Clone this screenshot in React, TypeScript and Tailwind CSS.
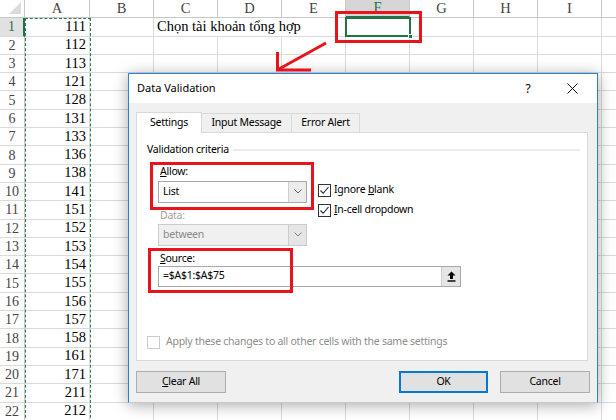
import React from 'react';

const VALUES = [
  111, 112, 113, 121, 128, 131, 133, 136, 138, 141, 151, 152, 153, 154, 155,
  156, 157, 158, 161, 171, 211, 212,
];
const COLS = ['A', 'B', 'C', 'D', 'E', 'F', 'G', 'H', 'I'];

const colWidth = (c: string) => (c === 'A' ? 'w-[65px]' : 'w-[64px]');

const Chevron: React.FC<{ color?: string }> = ({ color = '#606060' }) => (
  <svg width="8" height="5" viewBox="0 0 8 5">
    <path d="M0.5 0.5 L4 4 L7.5 0.5" fill="none" stroke={color} strokeWidth="1" />
  </svg>
);

const CheckBox: React.FC<{ checked?: boolean; disabled?: boolean }> = ({
  checked,
  disabled,
}) => (
  <div
    className={`w-[13px] h-[13px] flex-shrink-0 border bg-white flex items-center justify-center ${
      disabled ? 'border-[#cccccc]' : 'border-[#333333]'
    }`}
  >
    {checked && (
      <svg width="11" height="11" viewBox="0 0 11 11">
        <path d="M1.5 5.5 L4.2 8.3 L9.5 2" fill="none" stroke="#222" strokeWidth="1.1" />
      </svg>
    )}
  </div>
);

const Sheet: React.FC = () => (
  <div className="flex flex-col font-['Liberation_Serif',serif] text-[14.5px] text-black">
    {/* column headers */}
    <div className="flex h-[18.3px]">
      <div className="w-[25px] flex-shrink-0 border-r border-b border-[#c8c8c8] relative">
        <svg className="absolute right-[3px] bottom-[3px]" width="12" height="12" viewBox="0 0 12 12">
          <path d="M12 0 L12 12 L0 12 Z" fill="#dcdcdc" />
        </svg>
      </div>
      {COLS.map((c) => (
        <div
          key={c}
          className={`${colWidth(c)} flex-shrink-0 flex items-center justify-center border-r ${
            c === 'F'
              ? 'bg-[#d6d6d6] text-[#217346] border-b-2 border-b-[#217346] border-r-[#c8c8c8]'
              : 'text-[#444444] border-b border-[#c8c8c8]'
          }`}
        >
          {c}
        </div>
      ))}
      <div className="flex-1 border-b border-[#c8c8c8]" />
    </div>
    {VALUES.map((v, i) => (
      <div key={i} className="flex h-[18.3px] flex-shrink-0">
        <div
          className={`w-[25px] flex-shrink-0 flex items-center justify-center text-[14px] border-b border-[#dadada] ${
            i === 0
              ? 'bg-[#e1e1e1] text-[#217346] border-r-2 border-r-[#217346]'
              : 'text-[#444444] border-r border-r-[#c8c8c8]'
          }`}
        >
          {i + 1}
        </div>
        {COLS.map((c) => (
          <div
            key={c}
            className={`${colWidth(c)} flex-shrink-0 flex items-center border-b border-[#dadada] ${
              i === 0 && (c === 'C' || c === 'D') ? '' : 'border-r'
            } ${c === 'A' ? 'justify-end pr-[3px]' : ''} ${
              c === 'C' ? 'pl-[3px] overflow-visible whitespace-nowrap' : ''
            }`}
          >
            {c === 'A' && v}
            {c === 'C' && i === 0 && (
              <span className="text-[14.5px]">Chọn tài khoản tổng hợp</span>
            )}
          </div>
        ))}
        <div className="flex-1 border-b border-[#dadada]" />
      </div>
    ))}
  </div>
);

const Dialog: React.FC = () => (
  <div className="absolute left-[128px] top-[73px] w-[470px] h-[330px] flex flex-col border border-[#2a82d8] border-b-[#c9c9c9] bg-[#f0f0f0] shadow-[0_2px_14px_rgba(0,0,0,0.35)] font-['Noto_Sans',sans-serif] text-[10.5px] tracking-[-0.25px] text-black">
    <div className="h-[29px] bg-white flex items-center pl-[8px]">
      <span className="text-[11px] tracking-normal">Data Validation</span>
      <span className="ml-auto text-[12px] w-[10px] text-center">?</span>
      <div className="w-[11px] ml-[34px] mr-[19px] flex items-center">
        <svg width="11" height="11" viewBox="0 0 11 11">
          <path d="M0.5 0.5 L10.5 10.5 M10.5 0.5 L0.5 10.5" stroke="#111" strokeWidth="1" />
        </svg>
      </div>
    </div>
    <div className="flex-1 flex flex-col pl-[7px] pt-[8px]">
      {/* tabs */}
      <div className="flex items-end h-[21px]">
        <div className="w-[66px] h-[21px] bg-white border border-[#d9d9d9] border-b-0 flex items-center justify-center relative z-10 -mb-px pb-px">
          Settings
        </div>
        <div className="w-[90px] h-[19px] border-t border-r border-[#d9d9d9] flex items-center justify-center">
          Input Message
        </div>
        <div className="w-[68px] h-[19px] border-t border-r border-[#d9d9d9] flex items-center justify-center">
          Error Alert
        </div>
      </div>
      {/* panel */}
      <div className="w-[452px] h-[229px] bg-white border border-[#d9d9d9] flex flex-col pl-[10px]">
        <div className="flex items-center pt-[9px]">
          <span>Validation criteria</span>
          <div className="flex-1 h-[2px] bg-[#ececec] ml-[4px] mr-[7px] mt-px" />
        </div>
        <div className="flex pl-[11px] mt-[5px]">
          <div className="w-[149px] flex flex-col">
            <div className="pl-[2px] h-[16px] leading-[16px]">
              <span className="underline">A</span>llow:
            </div>
            <div className="mt-[2px] h-[22px] border border-[#a8a8a8] flex items-center bg-white">
              <span className="pl-[4px] flex-1">List</span>
              <div className="w-[18px] h-full border-l border-[#cfcfcf] bg-[#ececec] flex items-center justify-center">
                <Chevron />
              </div>
            </div>
            <div className="pl-[2px] h-[16px] leading-[16px] mt-[4px] text-[#a0a0a0]">
              Data:
            </div>
            <div className="mt-px h-[22px] border border-[#cccccc] flex items-center bg-[#f0f0f0] text-[#8a8a8a]">
              <span className="pl-[4px] flex-1">between</span>
              <div className="w-[18px] h-full border-l border-[#cccccc] bg-[#e5e5e5] flex items-center justify-center">
                <Chevron color="#808080" />
              </div>
            </div>
          </div>
          <div className="flex flex-col ml-[11px] mt-[21px] gap-[7px]">
            <div className="flex items-center gap-[3px] h-[13px]">
              <CheckBox checked />
              <span>
                Ignore <span className="underline">b</span>lank
              </span>
            </div>
            <div className="flex items-center gap-[3px] h-[13px]">
              <CheckBox checked />
              <span>
                <span className="underline">I</span>n-cell dropdown
              </span>
            </div>
          </div>
        </div>
        <div className="pl-[13px] h-[16px] leading-[16px] mt-[4px]">
          <span className="underline">S</span>ource:
        </div>
        <div className="ml-[11px] w-[303px] h-[21px] border border-[#a8a8a8] flex items-center bg-white">
          <span className="pl-[4px] flex-1">=$A$1:$A$75</span>
          <div className="w-[19px] h-full border-l border-[#cfcfcf] bg-[#e5e5e5] flex items-center justify-center">
            <svg width="9" height="11" viewBox="0 0 9 11">
              <path d="M4.5 0.5 L8.5 4.5 L6 4.5 L6 8 L3 8 L3 4.5 L0.5 4.5 Z" fill="#000" />
              <rect x="0.5" y="9.3" width="8" height="1.4" fill="#000" />
            </svg>
          </div>
        </div>
        <div className="mt-auto mb-[10px] flex items-center gap-[6px] text-[#8d8d8d]">
          <CheckBox disabled />
          <span>Apply these changes to all other cells with the same settings</span>
        </div>
      </div>
      {/* buttons */}
      <div className="flex mt-[10px]">
        <button className="w-[90px] h-[22px] bg-[#e1e1e1] border border-[#adadad] flex items-center justify-center">
          <span className="underline">C</span>lear All
        </button>
        <button className="ml-auto w-[89px] h-[22px] bg-[#e1e1e1] border-2 border-[#0078d7] flex items-center justify-center">
          OK
        </button>
        <button className="ml-[12px] mr-[7px] w-[90px] h-[22px] bg-[#e1e1e1] border border-[#adadad] flex items-center justify-center">
          Cancel
        </button>
      </div>
    </div>
  </div>
);

export default function App() {
  return (
    <div className="relative w-[616px] h-[420px] overflow-hidden bg-white">
      <Sheet />
      {/* copy marquee around column A */}
      <div className="absolute left-[25px] top-[18px] w-[66px] h-[410px] border-[1.5px] border-dashed border-[#2e7d4f]" />
      {/* active cell F1 */}
      <div className="absolute left-[345px] top-[17px] w-[66px] h-[20px] border-2 border-[#217346]">
        <div className="absolute right-[-4px] bottom-[-4px] w-[5px] h-[5px] bg-[#217346] border border-white" />
      </div>
      <Dialog />
      {/* annotations */}
      <div className="absolute left-[335px] top-[11px] w-[87px] h-[32px] border-[3px] border-[#e8141c]" />
      <div className="absolute left-[150px] top-[162px] w-[164px] h-[48px] border-[3px] border-[#e8141c]" />
      <div className="absolute left-[148px] top-[248px] w-[145px] h-[45px] border-[3px] border-[#e8141c]" />
      <svg className="absolute left-0 top-0 pointer-events-none" width="616" height="420">
        <path d="M326 43 L279 69" stroke="#e8141c" strokeWidth="3" />
        <path d="M277.5 52 L277.5 70 L311 70" fill="none" stroke="#e8141c" strokeWidth="3" />
      </svg>
    </div>
  );
}
